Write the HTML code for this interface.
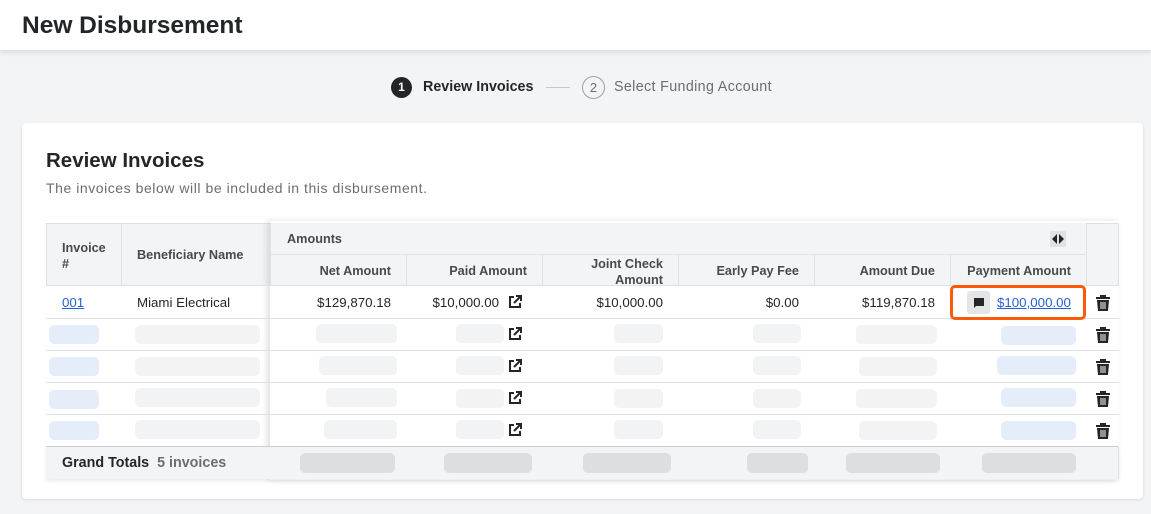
<!DOCTYPE html>
<html><head><meta charset="utf-8"><style>
*{box-sizing:border-box;margin:0;padding:0}
body{width:1151px;height:514px;background:#f3f4f6;font-family:"Liberation Sans",sans-serif;position:relative;overflow:hidden;color:#232628}
.a{position:absolute}
.hdr{left:0;top:0;width:1151px;height:50px;background:#fff;box-shadow:0 2px 6px rgba(0,0,0,.12)}
.card{left:22px;top:123px;width:1121px;height:376px;background:#fff;border-radius:4px;box-shadow:0 1px 3px rgba(0,0,0,.1)}
.t{font-size:13.3px;white-space:nowrap}
.th{font-size:12.7px;font-weight:bold;color:#474b4e;white-space:nowrap}
.hl{background:#dfe1e3}
.sk{background:#f2f3f4;border-radius:5px;height:19px}
.sb{background:#e6edfa;border-radius:5px;height:19px}
.sg{background:#dcdee1;border-radius:5px;height:20px}
.r{text-align:right}
</style></head><body>
<div class="a hdr"></div>
<div class="a" style="left:22px;top:12px;font-size:24.5px;font-weight:bold;color:#232628">New Disbursement</div>

<div class="a" style="left:391px;top:77px;width:21px;height:21px;border-radius:50%;background:#232628;color:#fff;font-size:12px;font-weight:bold;text-align:center;line-height:21px">1</div>
<div class="a t" style="left:423px;top:79px;font-size:14.3px;font-weight:bold;color:#232628">Review Invoices</div>
<div class="a" style="left:546px;top:87px;width:24px;height:1px;background:#c6c9cc"></div>
<div class="a" style="left:582px;top:76px;width:23px;height:23px;border-radius:50%;border:1px solid #9da1a5;color:#6a6e72;font-size:13px;text-align:center;line-height:21px">2</div>
<div class="a t" style="left:614px;top:79px;font-size:14.3px;letter-spacing:0.35px;color:#6a6e72">Select Funding Account</div>

<div class="a card"></div>
<div class="a" style="left:46px;top:149px;font-size:20.5px;font-weight:bold">Review Invoices</div>
<div class="a t" style="left:46px;top:180px;font-size:14px;letter-spacing:0.55px;color:#6a6e72">The invoices below will be included in this disbursement.</div>

<!-- table header -->
<div class="a" style="left:46px;top:223px;width:1073px;height:63px;background:#f3f4f6;border:1px solid #dfe1e3"></div>
<div class="a" style="left:270px;top:221px;width:849px;height:259px;box-shadow:-3px 0 6px rgba(0,0,0,.12)"></div>
<div class="a" style="left:270px;top:223px;width:816px;height:63px;background:#f3f4f6;border-left:1px solid #dfe1e3"></div>
<div class="a hl" style="left:270px;top:254px;width:816px;height:1px"></div>
<div class="a hl" style="left:46px;top:285px;width:1073px;height:1px"></div>
<div class="a hl" style="left:121px;top:223px;width:1px;height:63px"></div>
<div class="a hl" style="left:1086px;top:223px;width:1px;height:63px"></div>
<div class="a hl" style="left:406px;top:255px;width:1px;height:31px"></div>
<div class="a hl" style="left:542px;top:255px;width:1px;height:31px"></div>
<div class="a hl" style="left:678px;top:255px;width:1px;height:31px"></div>
<div class="a hl" style="left:814px;top:255px;width:1px;height:31px"></div>
<div class="a hl" style="left:950px;top:255px;width:1px;height:31px"></div>

<div class="a th" style="left:62px;top:240px;line-height:16px">Invoice<br>#</div>
<div class="a th" style="left:137px;top:248px">Beneficiary Name</div>
<div class="a th" style="left:287px;top:232px">Amounts</div>
<div class="a" style="left:1050px;top:231px;width:16px;height:16px;background:#dfe1e3;border-radius:2px"></div>
<svg class="a" style="left:1051px;top:233px" width="14" height="12" viewBox="0 0 14 12"><path d="M6 1L1 6l5 5z M8 1l5 5-5 5z" fill="#232628"/></svg>
<div class="a th r" style="left:270px;width:121px;top:264px">Net Amount</div>
<div class="a th r" style="left:406px;width:121px;top:264px">Paid Amount</div>
<div class="a th r" style="left:542px;width:121px;top:256px;line-height:16px">Joint Check<br>Amount</div>
<div class="a th r" style="left:678px;width:121px;top:264px">Early Pay Fee</div>
<div class="a th r" style="left:814px;width:121px;top:264px">Amount Due</div>
<div class="a th r" style="left:950px;width:121px;top:264px">Payment Amount</div>

<!-- row lines -->
<div class="a hl" style="left:46px;top:318px;width:1073px;height:1px"></div>
<div class="a hl" style="left:46px;top:350px;width:1073px;height:1px"></div>
<div class="a hl" style="left:46px;top:382px;width:1073px;height:1px"></div>
<div class="a hl" style="left:46px;top:414px;width:1073px;height:1px"></div>

<!-- row1 -->
<div class="a t" style="left:62px;top:295px;color:#2563d6;text-decoration:underline">001</div>
<div class="a t" style="left:137px;top:295px">Miami Electrical</div>
<div class="a t r" style="left:270px;width:121px;top:295px">$129,870.18</div>
<div class="a t r" style="left:406px;width:93px;top:295px">$10,000.00</div>
<div class="a t r" style="left:542px;width:121px;top:295px">$10,000.00</div>
<div class="a t r" style="left:678px;width:121px;top:295px">$0.00</div>
<div class="a t r" style="left:814px;width:121px;top:295px">$119,870.18</div>
<div class="a" style="left:950px;top:285px;width:136px;height:35px;border:3px solid #fa5a0a;border-radius:5px"></div>
<div class="a" style="left:967px;top:291px;width:23px;height:23px;background:#e3e5e7;border-radius:3px"></div>
<svg class="a" style="left:973px;top:297px" width="12" height="12" viewBox="0 0 12 12"><path d="M1 1h10v8H3L1 11z" fill="#232628"/></svg>
<div class="a t" style="left:997px;top:295px;color:#2563d6;text-decoration:underline">$100,000.00</div>

<!-- skeleton rows -->
<div class="a sb" style="left:49px;top:325px;width:50px"></div>
<div class="a sk" style="left:135px;top:325px;width:125px"></div>
<div class="a sk" style="left:316px;top:324px;width:81px"></div>
<div class="a sk" style="left:456px;top:324px;width:48px"></div>
<div class="a sk" style="left:614px;top:324px;width:49px"></div>
<div class="a sk" style="left:753px;top:324px;width:48px"></div>
<div class="a sk" style="left:856px;top:325px;width:81px"></div>
<div class="a sb" style="left:1001px;top:326px;width:75px"></div>

<div class="a sb" style="left:49px;top:357px;width:50px"></div>
<div class="a sk" style="left:135px;top:357px;width:125px"></div>
<div class="a sk" style="left:319px;top:356px;width:78px"></div>
<div class="a sk" style="left:456px;top:356px;width:48px"></div>
<div class="a sk" style="left:614px;top:356px;width:49px"></div>
<div class="a sk" style="left:753px;top:356px;width:48px"></div>
<div class="a sk" style="left:859px;top:357px;width:78px"></div>
<div class="a sb" style="left:997px;top:356px;width:79px"></div>

<div class="a sb" style="left:49px;top:390px;width:50px"></div>
<div class="a sk" style="left:135px;top:388px;width:125px"></div>
<div class="a sk" style="left:326px;top:388px;width:71px"></div>
<div class="a sk" style="left:456px;top:389px;width:48px"></div>
<div class="a sk" style="left:614px;top:389px;width:49px"></div>
<div class="a sk" style="left:753px;top:389px;width:48px"></div>
<div class="a sk" style="left:856px;top:389px;width:81px"></div>
<div class="a sb" style="left:1001px;top:388px;width:75px"></div>

<div class="a sb" style="left:49px;top:421px;width:50px"></div>
<div class="a sk" style="left:135px;top:420px;width:125px"></div>
<div class="a sk" style="left:324px;top:420px;width:73px"></div>
<div class="a sk" style="left:456px;top:420px;width:48px"></div>
<div class="a sk" style="left:614px;top:420px;width:49px"></div>
<div class="a sk" style="left:753px;top:420px;width:48px"></div>
<div class="a sk" style="left:859px;top:421px;width:78px"></div>
<div class="a sb" style="left:1001px;top:421px;width:75px"></div>

<!-- external link icons -->
<svg class="a" style="left:508px;top:295px" width="14" height="14" viewBox="0 0 14 14"><path d="M6 2H2v10h10V8" fill="none" stroke="#232628" stroke-width="2"/><path d="M8 1h5v5M13 1L6 8" fill="none" stroke="#232628" stroke-width="2"/></svg>
<svg class="a" style="left:508px;top:327px" width="14" height="14" viewBox="0 0 14 14"><path d="M6 2H2v10h10V8" fill="none" stroke="#232628" stroke-width="2"/><path d="M8 1h5v5M13 1L6 8" fill="none" stroke="#232628" stroke-width="2"/></svg>
<svg class="a" style="left:508px;top:359px" width="14" height="14" viewBox="0 0 14 14"><path d="M6 2H2v10h10V8" fill="none" stroke="#232628" stroke-width="2"/><path d="M8 1h5v5M13 1L6 8" fill="none" stroke="#232628" stroke-width="2"/></svg>
<svg class="a" style="left:508px;top:391px" width="14" height="14" viewBox="0 0 14 14"><path d="M6 2H2v10h10V8" fill="none" stroke="#232628" stroke-width="2"/><path d="M8 1h5v5M13 1L6 8" fill="none" stroke="#232628" stroke-width="2"/></svg>
<svg class="a" style="left:508px;top:423px" width="14" height="14" viewBox="0 0 14 14"><path d="M6 2H2v10h10V8" fill="none" stroke="#232628" stroke-width="2"/><path d="M8 1h5v5M13 1L6 8" fill="none" stroke="#232628" stroke-width="2"/></svg>

<!-- trash icons -->
<svg class="a" style="left:1096px;top:295px" width="14" height="16" viewBox="0 0 14 16"><path d="M4 0h6v2h4v2H0V2h4z M1 5h12l-1 11H2z" fill="#232628"/><path d="M5 7v7M7 7v7M9 7v7" stroke="#fff" stroke-width="1"/></svg>
<svg class="a" style="left:1096px;top:327px" width="14" height="16" viewBox="0 0 14 16"><path d="M4 0h6v2h4v2H0V2h4z M1 5h12l-1 11H2z" fill="#232628"/><path d="M5 7v7M7 7v7M9 7v7" stroke="#fff" stroke-width="1"/></svg>
<svg class="a" style="left:1096px;top:359px" width="14" height="16" viewBox="0 0 14 16"><path d="M4 0h6v2h4v2H0V2h4z M1 5h12l-1 11H2z" fill="#232628"/><path d="M5 7v7M7 7v7M9 7v7" stroke="#fff" stroke-width="1"/></svg>
<svg class="a" style="left:1096px;top:391px" width="14" height="16" viewBox="0 0 14 16"><path d="M4 0h6v2h4v2H0V2h4z M1 5h12l-1 11H2z" fill="#232628"/><path d="M5 7v7M7 7v7M9 7v7" stroke="#fff" stroke-width="1"/></svg>
<svg class="a" style="left:1096px;top:423px" width="14" height="16" viewBox="0 0 14 16"><path d="M4 0h6v2h4v2H0V2h4z M1 5h12l-1 11H2z" fill="#232628"/><path d="M5 7v7M7 7v7M9 7v7" stroke="#fff" stroke-width="1"/></svg>

<!-- totals -->
<div class="a" style="left:46px;top:446px;width:1073px;height:33px;background:#f3f4f6;border-top:1px solid #c9ccd0;border-right:1px solid #dfe1e3;box-shadow:0 2px 4px rgba(0,0,0,.08)"></div>
<div class="a" style="left:62px;top:455px;font-size:14.3px;font-weight:bold;color:#232628">Grand Totals <span style="color:#6a6e72;margin-left:4px">5 invoices</span></div>
<div class="a sg" style="left:300px;top:453px;width:95px"></div>
<div class="a sg" style="left:444px;top:453px;width:88px"></div>
<div class="a sg" style="left:583px;top:453px;width:88px"></div>
<div class="a sg" style="left:747px;top:453px;width:61px"></div>
<div class="a sg" style="left:846px;top:453px;width:94px"></div>
<div class="a sg" style="left:982px;top:453px;width:94px"></div>
</body></html>
